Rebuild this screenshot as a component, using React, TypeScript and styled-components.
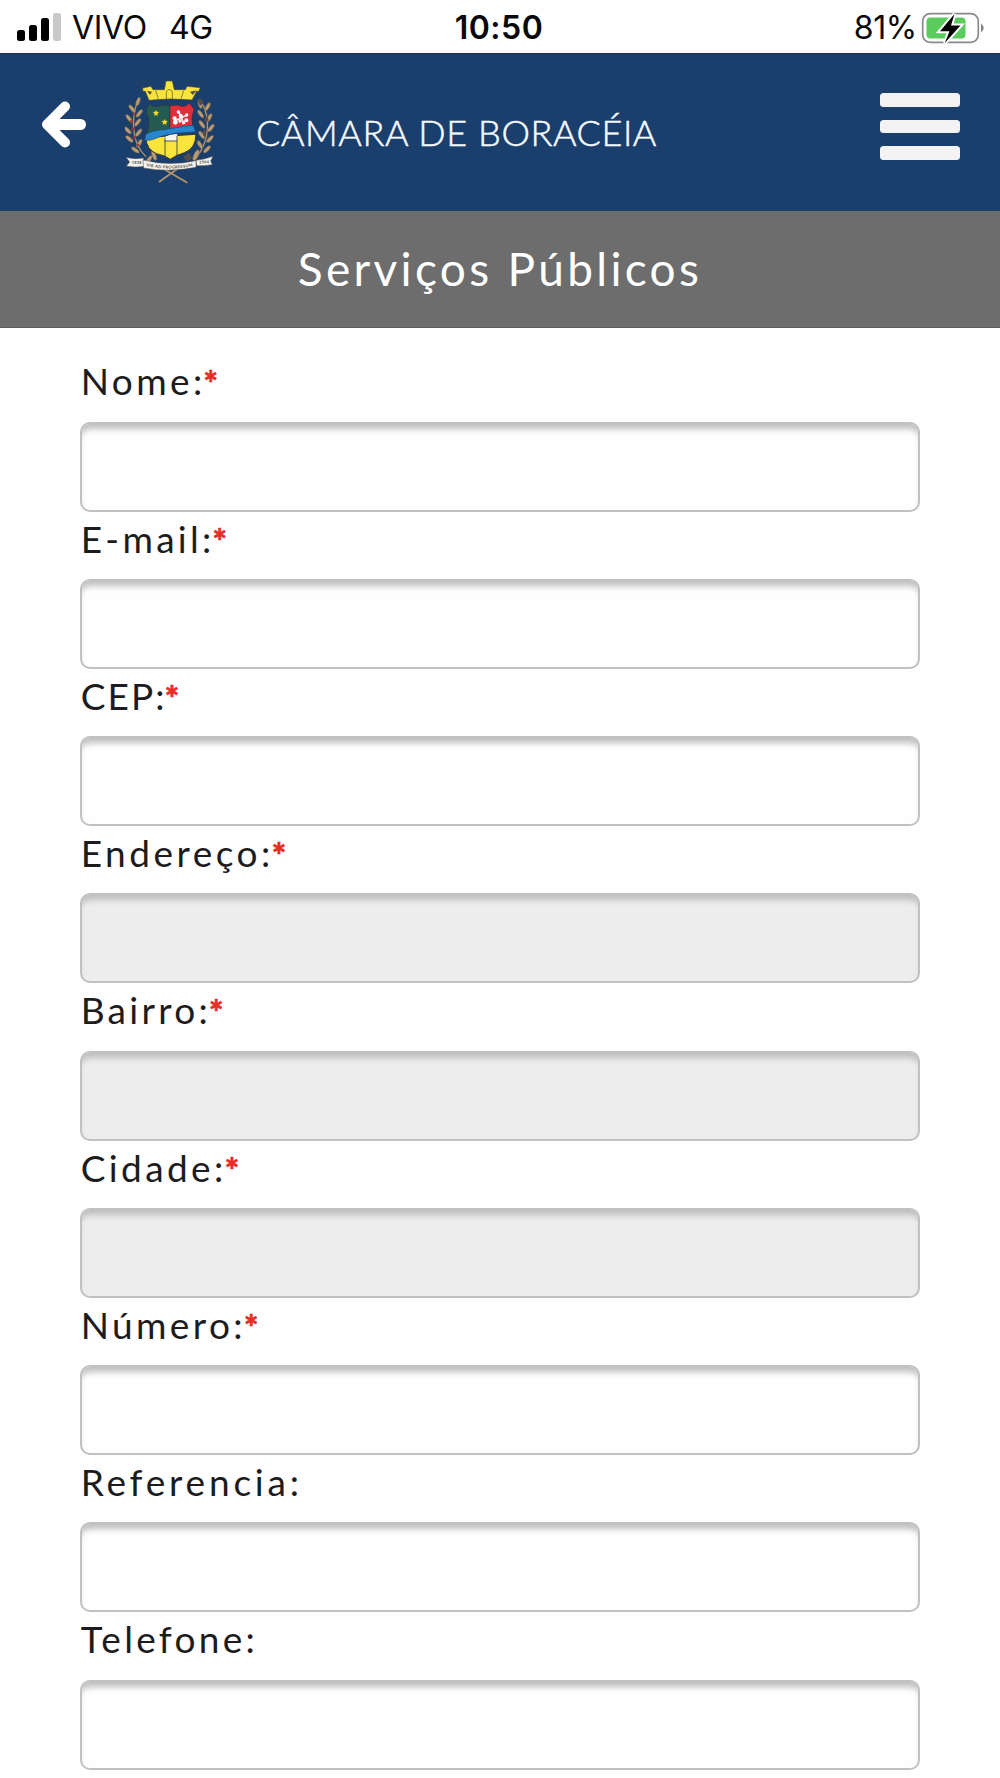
import styled, { createGlobalStyle } from 'styled-components';

interface FieldData {
  label: string;
  name: string;
  spacing: number;
  required?: boolean;
  disabled?: boolean;
}

const fields: FieldData[] = [
  { label: 'Nome:', name: 'nome', spacing: 3.4, required: true },
  { label: 'E-mail:', name: 'email', spacing: 3.3, required: true },
  { label: 'CEP:', name: 'cep', spacing: 2.1, required: true },
  { label: 'Endereço:', name: 'endereco', spacing: 3.5, required: true, disabled: true },
  { label: 'Bairro:', name: 'bairro', spacing: 3.3, required: true, disabled: true },
  { label: 'Cidade:', name: 'cidade', spacing: 3.4, required: true, disabled: true },
  { label: 'Número:', name: 'numero', spacing: 3.4, required: true },
  { label: 'Referencia:', name: 'referencia', spacing: 3.8 },
  { label: 'Telefone:', name: 'telefone', spacing: 3.3 }
];

const leftLeaves = [
  [84, 95, 20], [66, 116, -38], [88, 130, 38], [57, 145, -38], [83, 157, 38],
  [53, 181, -45], [86, 188, 38], [58, 207, -50], [88, 220, 30], [76, 240, -55]
];

const rightLeaves = [
  [270, 102, -15], [293, 110, 30], [272, 132, -35], [298, 143, 28], [276, 163, -35],
  [303, 174, 38], [275, 195, -35], [300, 207, 42], [270, 224, -30], [291, 238, 45]
];

const Crest = () => (
  <CrestSvg viewBox="45 30 270 315">
    <g fill="none" stroke="#b39468" strokeWidth="4">
      <path d="M84 90C65 140 60 215 108 260" />
      <path d="M275 98C302 145 299 210 260 262" />
      <path d="M147 336L214 288M232 338L146 288" strokeWidth="5" />
    </g>
    <g fill="#b89b72" stroke="#5e5648" strokeWidth="1.5">
      {[...leftLeaves, ...rightLeaves].map(([x, y, turn]) => (
        <ellipse
          key={`${x}-${y}`}
          cx={x}
          cy={y}
          rx="5.5"
          ry="14"
          transform={`rotate(${turn} ${x} ${y})`}
        />
      ))}
      <ellipse cx="116" cy="270" rx="6" ry="17" transform="rotate(35 116 270)" />
      <ellipse cx="132" cy="256" rx="6" ry="16" transform="rotate(-20 132 256)" />
      <ellipse cx="258" cy="256" rx="7" ry="18" transform="rotate(25 258 256)" />
    </g>
    <g fill="#9b3440">
      <circle cx="71" cy="132" r="4" />
      <circle cx="64" cy="155" r="5" />
      <circle cx="69" cy="177" r="5" />
      <circle cx="73" cy="203" r="5" />
      <circle cx="84" cy="225" r="4" />
    </g>
    <g fill="#554c49">
      <path d="M262 91l12-5 7 13-11 8z" />
      <path d="M282 145l10-7 4 13-12 5z" />
      <path d="M220 262l16-14 10 16-13 11z" />
      <path d="M276 185l9-7 5 14-9 6z" />
    </g>
    <path
      d="M98 54L123 49L129 59H163L168 33H187L193 59H226L231 49L271 53L266 64H260L246 90Q180 83 117 91L106 64H99Z"
      fill="#f8e43b"
      stroke="#4f4c38"
      strokeWidth="2"
    />
    <g fill="#594f3e">
      <path d="M111 62L126 65L120 75Z" />
      <path d="M240 65L260 61L248 75Z" />
    </g>
    <path d="M169 88V64q9-10 18 0v24M137 62l8 24M221 62l-8 24" fill="none" stroke="#4f4c38" strokeWidth="2" />
    <path d="M119 101Q136 117 155 105L180 107V178Q137 189 107 198Q119 167 117 145Q108 133 109 117Z" fill="#235b50" stroke="#382f32" strokeWidth="2" />
    <path d="M180 107L204 105Q221 116 238 100L252 117Q242 144 248 166L180 178Z" fill="#df2d3b" stroke="#4d2932" strokeWidth="2" />
    <path d="M107 203Q110 238 139 251Q168 257 181 268Q194 257 223 248Q257 236 258 193L161 199Z" fill="#f8e43b" stroke="#38372c" strokeWidth="3" />
    <path d="M162 202Q181 191 202 192V214H162Z" fill="#f5f4ee" />
    <path d="M162 213H201M165 202V259M201 197V256" fill="none" stroke="#38372c" strokeWidth="2.5" />
    <path d="M107 194Q126 180 164 179C193 174 215 169 249 166L257 185Q218 188 194 190Q161 196 145 202Q126 212 104 212Z" fill="#2885d0" stroke="#174d80" strokeWidth="2" />
    <path d="M138 119l3 6 7 1-5 5 1 7-6-3-6 3 1-7-5-5 7-1zM164 146l3 6 7 1-5 5 1 7-6-3-6 3 1-7-5-5 7-1z" fill="#f4dc33" stroke="#4c5d35" />
    <path d="M190 155L232 134M206 124L222 162" stroke="#f6eeee" strokeWidth="5" />
    <g fill="#fff">
      <circle cx="205" cy="126" r="5" />
      <circle cx="212" cy="137" r="6" />
      <circle cx="194" cy="145" r="6" />
      <circle cx="196" cy="157" r="7" />
      <circle cx="210" cy="153" r="5" />
      <circle cx="230" cy="135" r="5" />
      <circle cx="229" cy="151" r="6" />
      <circle cx="221" cy="158" r="5" />
    </g>
    <g fill="#f4f2ec" stroke="#554d48" strokeWidth="1.5">
      <path d="M48 262Q70 269 100 264L104 289Q76 294 49 288L59 276Z" />
      <path d="M258 271Q285 268 309 259L302 273L307 284Q284 288 260 287Z" />
      <path d="M99 270Q177 290 258 272V292Q178 308 101 294Z" />
    </g>
    <path id="motto" d="M109 288Q180 304 254 287" fill="none" />
    <g fill="#4b4644" fontFamily="Lato, sans-serif" fontSize="12" fontWeight="700">
      <text x="65" y="282" textLength="30">1938</text>
      <text x="268" y="281" textLength="29" transform="rotate(-4 268 281)">1964</text>
      <text>
        <textPath href="#motto" textLength="140">VIR AD PROGRESSUM</textPath>
      </text>
    </g>
  </CrestSvg>
);

const StatusBar = () => (
  <StatusWrap>
    <Carrier>
      <SignalBars>
        <SignalBar $height={11} />
        <SignalBar $height={16} />
        <SignalBar $height={23} />
        <SignalBar $height={28} $off />
      </SignalBars>
      <CarrierName>VIVO</CarrierName>
      <StatusText>4G</StatusText>
    </Carrier>
    <Clock>10:50</Clock>
    <Battery>
      <StatusText>81%</StatusText>
      <BatterySvg viewBox="0 0 64 34">
        <rect x="1.7" y="2.7" width="55.6" height="28.6" rx="7.5" fill="#fff" stroke="#8a8a8c" strokeWidth="1.7" />
        <rect x="5.5" y="6.5" width="39" height="21" rx="4" fill="#5acb5d" />
        <path d="M60 12.5Q65.5 17 60 21.5Z" fill="#858587" />
        <path d="M33.5 3L19 20.2H28.5L23.8 32L39.5 14.5H30Z" fill="#000" stroke="#fff" strokeWidth="4" paintOrder="stroke" />
      </BatterySvg>
    </Battery>
  </StatusWrap>
);

const Field = ({ label, name, spacing, required, disabled }: FieldData) => (
  <FieldWrap>
    <Label htmlFor={name} $spacing={spacing}>
      {label}
      {required && <Asterisk>*</Asterisk>}
    </Label>
    <Input id={name} name={name} disabled={disabled} />
  </FieldWrap>
);

const App = () => {
  return (
    <Page>
      <GlobalStyle />
      <StatusBar />
      <Header>
        <BackButton aria-label="Voltar">
          <svg width="46" height="48" viewBox="0 0 46 48">
            <path d="M24 5.5L6 23.5L24 41.5" fill="none" stroke="#fff" strokeWidth="10" strokeLinecap="round" strokeLinejoin="round" />
            <path d="M11 23.5H39.5" stroke="#fff" strokeWidth="11" strokeLinecap="round" />
          </svg>
        </BackButton>
        <Crest />
        <HeaderTitle>CÂMARA DE BORACÉIA</HeaderTitle>
        <MenuButton aria-label="Menu">
          <MenuLine />
          <MenuLine />
          <MenuLine />
        </MenuButton>
      </Header>
      <SectionTitle>Serviços Públicos</SectionTitle>
      <Form>
        {fields.map((field) => (
          <Field key={field.name} {...field} />
        ))}
      </Form>
    </Page>
  );
};

const GlobalStyle = createGlobalStyle`
  * {
    box-sizing: border-box;
  }

  body {
    margin: 0;
    background: #fefefe;
  }
`;

const Page = styled.div`
  width: 1000px;
  height: 1778px;
  overflow: hidden;
  font-family: Lato, 'Open Sans', sans-serif;
  background: #fefefe;
`;

const StatusWrap = styled.div`
  display: grid;
  grid-template-columns: 1fr auto 1fr;
  align-items: center;
  height: 53px;
  padding: 0 15px 0 17px;
  font-family: Inter, sans-serif;
  font-size: 32px;
  line-height: 54px;
  color: #080808;
`;

const Carrier = styled.div`
  display: flex;
  align-items: center;
`;

const SignalBars = styled.div`
  display: flex;
  align-items: flex-end;
  gap: 4px;
  height: 28px;
  margin: -1px 11px 0 0;
`;

const SignalBar = styled.div<{ $height: number; $off?: boolean }>`
  width: 8px;
  height: ${({ $height }) => $height}px;
  border-radius: 2.5px;
  background: ${({ $off }) => ($off ? '#c9c9c9' : '#000')};
`;

const StatusText = styled.span`
  padding-top: 1px;
  letter-spacing: -0.3px;
`;

const CarrierName = styled(StatusText)`
  margin-right: 22px;
`;

const Clock = styled.div`
  padding: 1px 4px 0 0;
  font-weight: 600;
  letter-spacing: 0.5px;
`;

const Battery = styled.div`
  display: flex;
  align-items: center;
  justify-content: flex-end;
  gap: 4px;
`;

const BatterySvg = styled.svg`
  width: 64px;
  height: 34px;
`;

const Header = styled.header`
  display: flex;
  align-items: center;
  height: 157.5px;
  padding: 0 40px 0 41px;
  background: #1a3f6d;
  border-top: 1px solid #15315a;
`;

const BackButton = styled.button`
  display: flex;
  margin: -14px 38px 0 0;
  padding: 0;
  border: none;
  background: none;
`;

const CrestSvg = styled.svg`
  flex: none;
  width: 90px;
  height: 105px;
`;

const HeaderTitle = styled.h1`
  margin: 0 0 0 41px;
  font-size: 36px;
  font-weight: 300;
  line-height: 48px;
  letter-spacing: 0.58px;
  white-space: nowrap;
  color: #f6faff;
  -webkit-text-stroke: 0.5px #f6faff;
`;

const MenuButton = styled.button`
  display: flex;
  flex-direction: column;
  gap: 13px;
  margin: -12px 0 0 auto;
  padding: 0;
  border: none;
  background: none;
`;

const MenuLine = styled.span`
  width: 80px;
  height: 13.5px;
  border-radius: 3.5px;
  background: #f3f3f4;
`;

const SectionTitle = styled.h2`
  height: 117px;
  margin: 0;
  border-bottom: 1px solid #5c5c5c;
  font-size: 46px;
  font-weight: 400;
  line-height: 115px;
  letter-spacing: 3.3px;
  text-align: center;
  color: #fff;
  background: #6d6d6d;
`;

const Form = styled.form`
  padding: 26.8px 80px 0;
`;

const FieldWrap = styled.div`
  display: flex;
  flex-direction: column;
`;

const Label = styled.label<{ $spacing: number }>`
  height: 54px;
  margin-bottom: 13.25px;
  padding-left: 0.7px;
  font-size: 37px;
  line-height: 53px;
  letter-spacing: ${({ $spacing }) => $spacing}px;
  white-space: nowrap;
  color: #1c1c1e;
`;

const Asterisk = styled.span`
  margin-left: -2px;
  font-size: 34px;
  font-weight: 900;
  line-height: 1;
  vertical-align: -1px;
  color: #e92b22;
  -webkit-text-stroke: 0.6px #e92b22;
`;

const Input = styled.input`
  width: 840px;
  height: 90px;
  padding: 0 20px;
  border: 2px solid #c1c1c1;
  border-radius: 10px;
  font: inherit;
  background: #fefefe;
  box-shadow: inset 0 8px 6px -3px #bebebe;

  &:disabled {
    background: #ededed;
  }
`;

export default App;
